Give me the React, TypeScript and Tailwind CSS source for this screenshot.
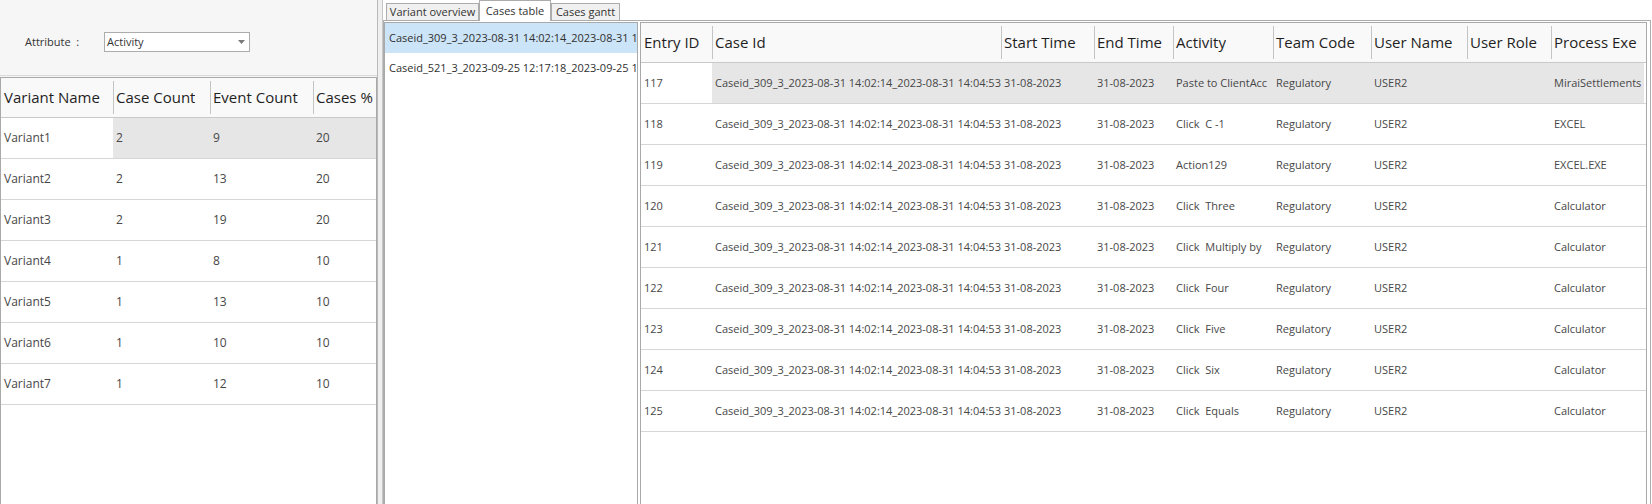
import React from "react";

type Col = { w: string; label: string };

const leftCols: Col[] = [
  { w: "w-[112px]", label: "Variant Name" },
  { w: "w-[97px]", label: "Case Count" },
  { w: "w-[103px]", label: "Event Count" },
  { w: "w-[63px]", label: "Cases %" },
];

const leftRows: string[][] = [
  ["Variant1", "2", "9", "20"],
  ["Variant2", "2", "13", "20"],
  ["Variant3", "2", "19", "20"],
  ["Variant4", "1", "8", "10"],
  ["Variant5", "1", "13", "10"],
  ["Variant6", "1", "10", "10"],
  ["Variant7", "1", "12", "10"],
];

const rightCols: Col[] = [
  { w: "w-[71px]", label: "Entry ID" },
  { w: "w-[289px]", label: "Case Id" },
  { w: "w-[93px]", label: "Start Time" },
  { w: "w-[79px]", label: "End Time" },
  { w: "w-[100px]", label: "Activity" },
  { w: "w-[98px]", label: "Team Code" },
  { w: "w-[96px]", label: "User Name" },
  { w: "w-[84px]", label: "User Role" },
  { w: "w-[93px]", label: "Process Exe" },
];

const caseId = "Caseid_309_3_2023-08-31 14:02:14_2023-08-31 14:04:53";

const rightData: [string, string, string][] = [
  ["117", "Paste to ClientAcc", "MiraiSettlements"],
  ["118", "Click  C -1", "EXCEL"],
  ["119", "Action129", "EXCEL.EXE"],
  ["120", "Click  Three", "Calculator"],
  ["121", "Click  Multiply by", "Calculator"],
  ["122", "Click  Four", "Calculator"],
  ["123", "Click  Five", "Calculator"],
  ["124", "Click  Six", "Calculator"],
  ["125", "Click  Equals", "Calculator"],
];

const rightRows: string[][] = rightData.map(([id, act, exe]) => [
  id,
  caseId,
  "31-08-2023",
  "31-08-2023",
  act,
  "Regulatory",
  "USER2",
  "",
  exe,
]);

function HeaderRow({ cols }: { cols: Col[] }) {
  return (
    <div className="flex h-[40px] shrink-0 border-b border-[#c9c9c9] bg-[#f9f9f9]">
      {cols.map((c, i) => (
        <div key={c.label} className={`${c.w} flex shrink-0 items-stretch`}>
          {i > 0 && <div className="my-[3px] w-px shrink-0 bg-[#c4c4c4]" />}
          <div
            className={`flex items-center overflow-hidden whitespace-nowrap text-[15px] text-[#1f1f1f] ${
              i > 0 ? "pl-[2px]" : "pl-[3px]"
            }`}
          >
            {c.label}
          </div>
        </div>
      ))}
    </div>
  );
}

function DataRow({
  cols,
  values,
  selected,
  size,
}: {
  cols: Col[];
  values: string[];
  selected: boolean;
  size: string;
}) {
  return (
    <div className="flex h-[41px] shrink-0 border-b border-[#d6d6d6]">
      {cols.map((c, i) => (
        <div
          key={i}
          className={`${c.w} ${size} flex shrink-0 items-center overflow-hidden whitespace-pre pl-[3px] text-[#474747] ${
            selected && i > 0 ? "bg-[#e6e6e6]" : ""
          }`}
        >
          {values[i]}
        </div>
      ))}
    </div>
  );
}

function Dropdown() {
  return (
    <div className="flex h-[20px] w-[146px] items-center justify-between border border-[#acacac] bg-white pl-[2px] pr-[4px]">
      <span className="text-[11px] text-[#333333]">Activity</span>
      <svg width="7" height="4" viewBox="0 0 7 4">
        <polygon points="0,0 7,0 3.5,4" fill="#7a7a7a" />
      </svg>
    </div>
  );
}

function Tab({ label, selected, w }: { label: string; selected?: boolean; w: string }) {
  return (
    <div
      className={`${w} flex shrink-0 items-center justify-center border border-b-0 border-[#acacac] text-[11px] text-[#333333] ${
        selected ? "relative z-10 -mb-px h-[21px] bg-white" : "h-[17px] bg-[#f0f0f0]"
      }`}
    >
      {label}
    </div>
  );
}

export default function App() {
  return (
    <div className="flex h-[504px] w-[1652px] overflow-hidden bg-white font-['Open_Sans',sans-serif]">
      {/* Left panel */}
      <div className="flex w-[378px] shrink-0 flex-col border-r border-[#b9b9b9] bg-[#f6f6f6]">
        <div className="flex h-[76px] shrink-0 items-center border-b border-[#dadada] pl-[25px] pt-[9px]">
          <span className="w-[79px] whitespace-pre text-[11px] text-[#333333]">Attribute  :</span>
          <Dropdown />
        </div>
        <div className="mt-[1px] flex flex-1 flex-col border border-b-0 border-[#a9a9a9] bg-white">
          <HeaderRow cols={leftCols} />
          {leftRows.map((r, i) => (
            <DataRow key={i} cols={leftCols} values={r} selected={i === 0} size="text-[12px]" />
          ))}
        </div>
      </div>

      {/* Splitter */}
      <div className="w-[5px] shrink-0 border-r border-[#c6c6c6] bg-[#efefef]" />

      {/* Tab control */}
      <div className="mr-[1px] flex min-w-0 flex-1 flex-col">
        <div className="flex h-[20px] shrink-0 items-end pl-[3px]">
          <Tab label="Variant overview" w="w-[93px]" />
          <Tab label="Cases table" w="w-[72px]" selected />
          <Tab label="Cases gantt" w="w-[69px]" />
        </div>
        <div className="flex min-h-0 flex-1 gap-[2px] border border-b-0 border-[#acacac] bg-white pr-[3px] pt-[1px]">
          {/* Case list */}
          <div className="flex w-[254px] shrink-0 flex-col overflow-hidden border border-b-0 border-[#a9a9a9] bg-white">
            <div className="flex h-[30px] shrink-0 items-center overflow-hidden whitespace-nowrap bg-[#cce4f7] pl-[4px] text-[11px] text-[#303030]">
              Caseid_309_3_2023-08-31 14:02:14_2023-08-31 14:04:53
            </div>
            <div className="flex h-[30px] shrink-0 items-center overflow-hidden whitespace-nowrap pl-[4px] text-[11px] text-[#303030]">
              Caseid_521_3_2023-09-25 12:17:18_2023-09-25 12:19:40
            </div>
          </div>
          {/* Grid */}
          <div className="flex min-w-0 flex-1 flex-col overflow-hidden border border-b-0 border-[#a9a9a9] bg-white">
            <HeaderRow cols={rightCols} />
            {rightRows.map((r, i) => (
              <DataRow key={i} cols={rightCols} values={r} selected={i === 0} size="text-[11px]" />
            ))}
          </div>
        </div>
      </div>
    </div>
  );
}
